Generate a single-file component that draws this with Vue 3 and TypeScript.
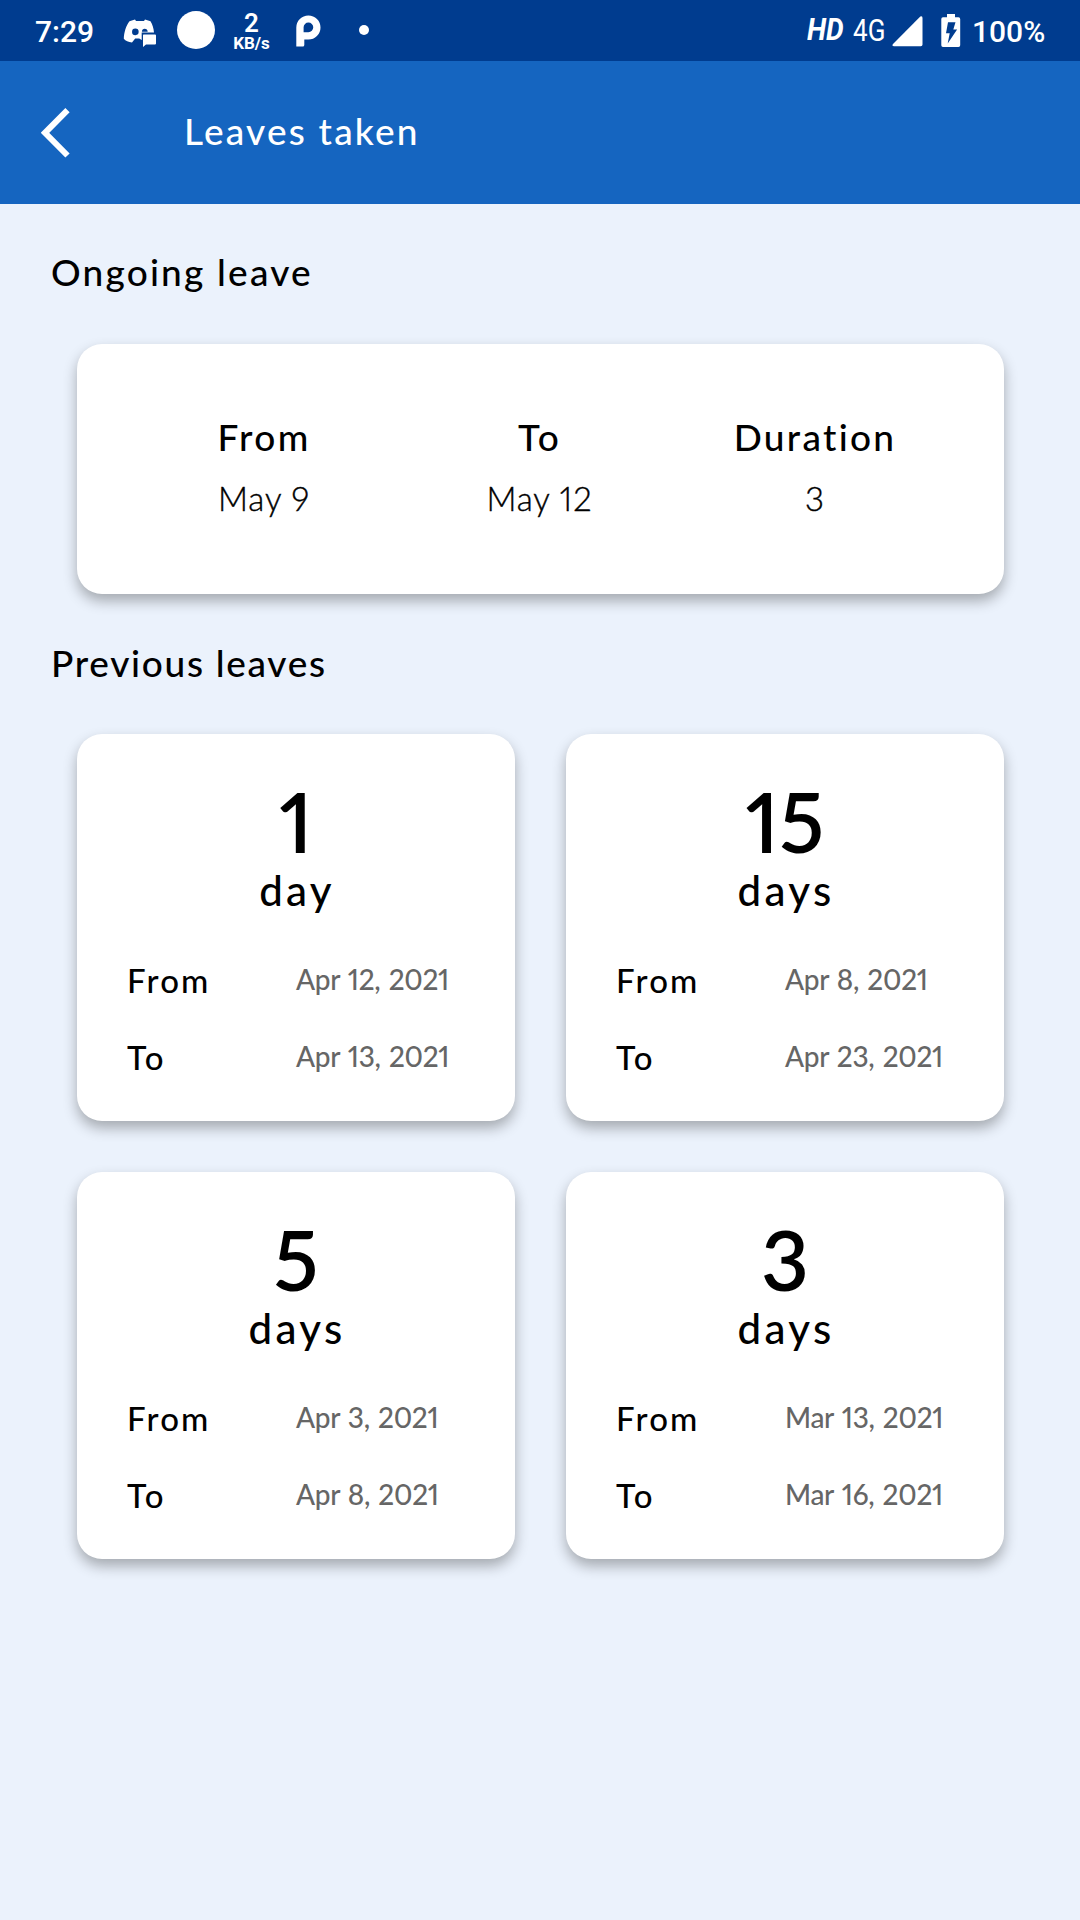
<script setup lang="ts">
interface Field {
  label: string
  value: string
}

interface Leave {
  days: number
  from: string
  to: string
}

const ongoing: Field[] = [
  { label: 'From', value: 'May 9' },
  { label: 'To', value: 'May 12' },
  { label: 'Duration', value: '3' },
]

const previous: Leave[] = [
  { days: 1, from: 'Apr 12, 2021', to: 'Apr 13, 2021' },
  { days: 15, from: 'Apr 8, 2021', to: 'Apr 23, 2021' },
  { days: 5, from: 'Apr 3, 2021', to: 'Apr 8, 2021' },
  { days: 3, from: 'Mar 13, 2021', to: 'Mar 16, 2021' },
]

const unit = (days: number): string => (days === 1 ? 'day' : 'days')
</script>

<template>
  <div class="screen">
    <div class="status">
      <div class="status-left">
        <span class="clock">7:29</span>
        <svg class="chat" width="34" height="30" viewBox="0 0 34 30">
          <path fill="#fff" fill-rule="evenodd" d="M6.500 3.200 12 1.600l1 1.400h8l1-1.400 5.500 1.600C29.500 6.500 30.600 10 31 14.500H18.700V22l-2.500-1.500h-4L9 24.500C5.500 24.200 2.500 22.800.8 20.800 1 14.500 3 7.500 6.500 3.200zM12.300 10.600a3.300 3.300 0 1 0 .1 6.600 3.300 3.300 0 0 0-.1-6.600zM21.700 10.800c-1.600 0-2.800 1.300-2.800 3h5.800c0-1.700-1.300-3-3-3z" />
          <path fill="#fff" d="M20.500 16.500h11.500q1 0 1 1v8q0 1-1 1H23l-3 2.500V17.500q0-1 .5-1z" />
        </svg>
        <span class="bubble"></span>
        <span class="speed"><b>2</b><small>KB/s</small></span>
        <svg class="p-logo" width="25" height="33" viewBox="0 0 25 33">
          <path fill="#fff" fill-rule="evenodd" d="M.3 31.500V12.500a12.100 12.100 0 1 1 12.100 12.100H8.300v5.400q0 1.500-1.500 1.500zM12.400 7.500a4.800 4.800 0 0 0-4.800 4.800v4.900h4.800a4.800 4.800 0 0 0 0-9.700z" />
        </svg>
        <span class="dot"></span>
      </div>
      <div class="status-right">
        <span class="hd">HD</span>
        <span class="net">4G</span>
        <svg class="signal" width="31" height="31" viewBox="0 0 31 31">
          <path fill="#fff" d="M28.300.5Q30.500-.6 30.500 2v26.500q0 1.700-1.700 1.700H2.200Q-.6 30.200 1 28z" />
        </svg>
        <svg class="battery" width="20" height="34" viewBox="0 0 20 34">
          <path fill="#fff" d="M6 0h8v3.300h3.500q1.700 0 1.700 1.700v26.300q0 1.700-1.700 1.700H2Q.3 33 .3 31.300V5q0-1.700 1.700-1.700h4z" />
          <path fill="#003c8f" d="M7 8.300h7.500l-2.200 7.200h3.800L6.700 29.500l2-10.300H5z" />
        </svg>
        <span class="charge">100%</span>
      </div>
    </div>

    <header class="bar">
      <svg class="back" width="30" height="52" viewBox="0 0 30 52">
        <path d="M26.500 3.200 4 25.800 26.500 48.500" fill="none" stroke="#fff" stroke-width="6" />
      </svg>
      <h1>Leaves taken</h1>
    </header>

    <main>
      <h2>Ongoing leave</h2>
      <section class="card ongoing">
        <div v-for="f in ongoing" :key="f.label" class="col">
          <span class="col-label">{{ f.label }}</span>
          <span class="col-value">{{ f.value }}</span>
        </div>
      </section>

      <h2 class="second">Previous leaves</h2>
      <section class="grid">
        <article v-for="(l, i) in previous" :key="i" class="card leave">
          <span class="count">{{ l.days }}</span>
          <span class="unit">{{ unit(l.days) }}</span>
          <dl>
            <dt>From</dt>
            <dd>{{ l.from }}</dd>
            <dt>To</dt>
            <dd>{{ l.to }}</dd>
          </dl>
        </article>
      </section>
    </main>
  </div>
</template>

<style>
body {
  margin: 0;
  background: #ebf2fc;
}
</style>

<style scoped>
.screen {
  width: 1080px;
  height: 1920px;
  overflow: hidden;
  background: #ebf2fc;
  color: #000;
  font-family: Lato, "Noto Sans", sans-serif;
  font-weight: 500;
  font-variant-numeric: proportional-nums;
  white-space: nowrap;
}

.status {
  display: flex;
  justify-content: space-between;
  height: 61px;
  background: #003c8f;
  color: #fff;
  font-family: Roboto, sans-serif;
  font-variant-numeric: normal;
}

.status-left,
.status-right {
  display: flex;
  align-items: flex-start;
}

.clock {
  width: 58px;
  margin: 14px 0 0 35px;
  font-size: 30px;
  line-height: 35px;
}

.chat {
  margin: 18px 0 0 30px;
}

.bubble {
  width: 38px;
  height: 38px;
  margin: 11px 0 0 20px;
  border-radius: 50%;
  background: #fff;
}

.speed {
  display: flex;
  flex-direction: column;
  align-items: center;
  width: 37px;
  margin: 11px 0 0 18px;
}

.speed b {
  font-size: 26px;
  font-weight: 600;
  line-height: 25px;
}

.speed small {
  font-size: 17px;
  font-weight: 700;
  line-height: 14px;
}

.p-logo {
  margin: 15px 0 0 26px;
}

.dot {
  width: 10px;
  height: 10px;
  margin: 25px 0 0 38px;
  border-radius: 50%;
  background: #fff;
}

.hd {
  width: 46px;
  margin-top: 12px;
  font-size: 31px;
  font-weight: 700;
  font-style: italic;
  line-height: 35px;
  transform: scaleX(0.9);
  transform-origin: left;
}

.net {
  width: 39px;
  margin-top: 13px;
  font-size: 31px;
  font-weight: 400;
  line-height: 35px;
  transform: scaleX(0.84);
  transform-origin: left;
}

.signal {
  margin-top: 16px;
}

.battery {
  margin: 14px 0 0 18px;
}

.charge {
  width: 72px;
  margin: 14px 36px 0 11px;
  font-size: 30px;
  line-height: 35px;
}

.bar {
  display: flex;
  align-items: flex-start;
  height: 142.500px;
  background: #1565c0;
  color: #fff;
}

.back {
  margin: 46px 0 0 41px;
}

h1,
h2 {
  margin: 0;
  font-size: 37px;
  font-weight: 500;
  line-height: 44px;
  letter-spacing: 2.200px;
}

h1 {
  margin: 48px 0 0 113px;
}

main {
  padding: 46px 76px 0 77px;
}

h2 {
  margin-left: -26px;
}

.card {
  border-radius: 25px;
  background: #fff;
  box-shadow: 0 7px 14px rgba(0, 0, 0, 0.3);
}

.ongoing {
  display: grid;
  grid-template-columns: repeat(3, 275.500px);
  justify-content: center;
  align-content: start;
  height: 250px;
  margin-top: 50px;
}

.col {
  display: flex;
  flex-direction: column;
  align-items: center;
  padding: 71px 2px 0 0;
}

.col-label {
  font-size: 37px;
  line-height: 44px;
  letter-spacing: 2.300px;
}

.col-value {
  margin-top: 19px;
  font-size: 33px;
  font-weight: 300;
  line-height: 40px;
  letter-spacing: 0.900px;
  -webkit-text-stroke: 0.400px #000;
}

.second {
  margin-top: 47px;
  letter-spacing: 1.700px;
}

.grid {
  display: grid;
  grid-template-columns: 438px 438px;
  gap: 51px;
  margin-top: 49px;
}

.leave {
  display: flex;
  flex-direction: column;
  align-items: center;
  height: 387px;
}

.count {
  margin-top: 43px;
  font-size: 83px;
  font-weight: 600;
  line-height: 89px;
}

.unit {
  margin: -1px 0 0 2px;
  font-size: 42px;
  line-height: 50px;
  letter-spacing: 3.300px;
}

dl {
  display: grid;
  grid-template-columns: 169px 1fr;
  grid-auto-rows: 77px;
  align-items: start;
  align-self: stretch;
  margin: 45px 0 0 50px;
}

dt {
  font-size: 33px;
  line-height: 40px;
  letter-spacing: 2.200px;
}

dd {
  margin: 0;
  color: #666;
  font-size: 28px;
  line-height: 38px;
  letter-spacing: -0.300px;
  word-spacing: 1.500px;
}
</style>
